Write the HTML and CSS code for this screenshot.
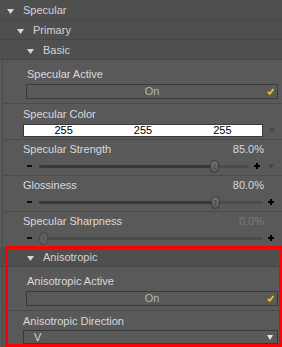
FILE: index.html
```html
<!DOCTYPE html>
<html lang="en">
<head>
    <meta charset="UTF-8">
    <title>Surface - Specular</title>
    <link rel="stylesheet" href="styles.css">
</head>
<body>
    <div class="panel">
        <div class="group lvl1"><svg class="caret" viewBox="0 0 7 5"><path d="M0 0h7L3.5 5z"/></svg>Specular</div>
        <div class="group lvl2"><svg class="caret" viewBox="0 0 7 5"><path d="M0 0h7L3.5 5z"/></svg>Primary</div>
        <div class="group lvl3"><svg class="caret" viewBox="0 0 7 5"><path d="M0 0h7L3.5 5z"/></svg>Basic</div>

        <div class="props">
            <!-- bool -->
            <div class="prop prop-bool">
                <div class="label-row"><span>Specular Active</span></div>
                <div class="toggle"><span></span><span>On</span><svg class="check" viewBox="0 0 7 7"><path d="M0.8 3.8L2.8 5.8L6.4 1"/></svg></div>
            </div>
            <!-- color -->
            <div class="prop prop-color">
                <div class="label-row"><span>Specular Color</span></div>
                <div class="color-row">
                    <div class="swatch"><span>255</span><span>255</span><span>255</span></div>
                    <svg class="arrow dark" viewBox="0 0 6 5"><path d="M0 0h6L3 5z"/></svg>
                </div>
            </div>
            <!-- sliders -->
            <div class="prop prop-slider">
                <div class="label-row"><span>Specular Strength</span><span class="value">85.0%</span></div>
                <div class="slider">
                    <span class="minus"></span>
                    <div class="track" style="--v: 0.85"><div class="fill"></div><div class="thumb"></div></div>
                    <svg class="plus" viewBox="0 0 6 6"><path d="M0 3h6M3 0v6"/></svg>
                    <svg class="arrow dark menu" viewBox="0 0 6 5"><path d="M0 0h6L3 5z"/></svg>
                </div>
            </div>
            <div class="prop prop-slider">
                <div class="label-row"><span>Glossiness</span><span class="value">80.0%</span></div>
                <div class="slider">
                    <span class="minus"></span>
                    <div class="track" style="--v: 0.8"><div class="fill"></div><div class="thumb"></div></div>
                    <svg class="plus" viewBox="0 0 6 6"><path d="M0 3h6M3 0v6"/></svg>
                </div>
            </div>
            <div class="prop prop-slider off">
                <div class="label-row"><span>Specular Sharpness</span><span class="value">0.0%</span></div>
                <div class="slider">
                    <span class="minus"></span>
                    <div class="track" style="--v: 0"><div class="thumb"></div></div>
                    <svg class="plus" viewBox="0 0 6 6"><path d="M0 3h6M3 0v6"/></svg>
                </div>
            </div>
        </div>

        <div class="highlight">
            <div class="group lvl3"><svg class="caret" viewBox="0 0 7 5"><path d="M0 0h7L3.5 5z"/></svg>Anisotropic</div>
            <div class="props">
                <div class="prop prop-bool">
                    <div class="label-row"><span>Anisotropic Active</span></div>
                    <div class="toggle"><span></span><span>On</span><svg class="check" viewBox="0 0 7 7"><path d="M0.8 3.8L2.8 5.8L6.4 1"/></svg></div>
                </div>
                <div class="prop prop-list">
                    <div class="label-row"><span>Anisotropic Direction</span></div>
                    <div class="select"><span>V</span><svg class="arrow light" viewBox="0 0 6 5"><path d="M0 0h6L3 5z"/></svg></div>
                </div>
            </div>
        </div>
    </div>
</body>
</html>
```

FILE: styles.css
```css
body {
    margin: 0;
    background-color: #595959;
    font-family: "Liberation Sans", Arial, sans-serif;
    font-size: 11px;
    color: #dadada;
}
.panel {
    width: 282px;
    height: 347px;
    overflow: hidden;
}

/* group headers */
.group {
    height: 19px;
    line-height: 21px;
    background-color: #4f4f4f;
    border-bottom: 1px solid #464646;
    color: #d4d4d4;
    white-space: nowrap;
}
.lvl1 { padding-left: 7px; }
.lvl2 { padding-left: 17px; }
.lvl3 { padding-left: 27px; }
.caret {
    width: 7px;
    height: 5px;
    margin-right: 9px;
    fill: #d6d6d6;
    vertical-align: 0;
}

/* property list */
.props {
    margin-left: 2px;
    border-left: 1px solid #4a4a4a;
}
.prop {
    border-bottom: 1px solid #4b4b4b;
}
.prop:last-child {
    border-bottom: none;
}
.label-row {
    display: flex;
    justify-content: space-between;
    line-height: 14px;
    padding-left: 20px;
    padding-right: 18px;
    white-space: nowrap;
}

.prop-bool { padding: 7px 0 4px; }
.prop-bool .label-row { padding-left: 24px; }
.toggle {
    margin: 3px 4px 0 23px;
    height: 13px;
    line-height: 13px;
    border: 1px solid #3a3a3a;
    display: grid;
    grid-template-columns: 1fr auto 1fr;
    align-items: center;
    color: #b6b6b6;
}
.check {
    justify-self: end;
    width: 7px;
    height: 7px;
    margin-right: 3px;
    fill: none;
    stroke: #f2c40f;
    stroke-width: 1.8;
}

.prop-color { padding: 3px 0 2px; }
.color-row {
    display: flex;
    align-items: center;
    margin-top: 3px;
    padding-left: 20px;
}
.swatch {
    width: 238px;
    height: 11px;
    line-height: 11px;
    border: 1px solid #3a3a3a;
    background-color: #fff;
    color: #000;
    display: grid;
    grid-template-columns: repeat(3, 1fr);
    text-align: center;
}
.arrow {
    width: 6px;
    height: 5px;
}
.arrow.dark { fill: #464646; }
.arrow.light { fill: #e6e6e6; }
.color-row .arrow { margin-left: 6px; }

.prop-slider { padding: 2px 0 3px; }
.slider {
    display: flex;
    align-items: center;
    height: 12px;
    margin-top: 4px;
    padding-left: 24px;
    padding-right: 8px;
}
.minus {
    width: 5px;
    height: 2px;
    background-color: #111;
    margin-right: 7px;
}
.track {
    flex: 1;
    position: relative;
    height: 3px;
    background-color: #4b4b4b;
    border-radius: 2px;
}
.fill {
    position: absolute;
    left: 0;
    top: 0;
    bottom: 0;
    width: calc((100% - 9px) * var(--v) + 4px);
    background-color: #383838;
    border-radius: 2px;
}
.thumb {
    position: absolute;
    top: -5px;
    left: calc((100% - 9px) * var(--v));
    width: 7px;
    height: 11px;
    border: 1px solid #3b3b3b;
    border-radius: 5px;
    background: linear-gradient(#707070, #585858);
}
.thumb::after {
    content: "";
    position: absolute;
    left: 3px;
    top: 3px;
    height: 5px;
    border-left: 1px dotted #3a3a3a;
}
.plus {
    width: 6px;
    height: 6px;
    margin-left: 5px;
    stroke: #000;
    stroke-width: 2;
}
.slider .menu { margin-left: 8px; }
.off .value { color: #7a7a7a; }
.off .thumb {
    background: #5f5f5f;
    border-color: #474747;
}
.off .thumb::after { border-left-color: #4a4a4a; }

.prop-list { padding: 3px 0 3px; }
.select {
    margin: 2px 4px 0 20px;
    height: 12px;
    line-height: 12px;
    border: 1px solid #3a3a3a;
    display: flex;
    justify-content: space-between;
    align-items: center;
    padding: 0 4px 0 10px;
}

/* red annotation frame */
.highlight {
    position: relative;
}
.highlight::after {
    content: "";
    position: absolute;
    left: 5px;
    top: -1px;
    right: 0;
    bottom: 0;
    border: 3px solid #f00;
    pointer-events: none;
}
```
